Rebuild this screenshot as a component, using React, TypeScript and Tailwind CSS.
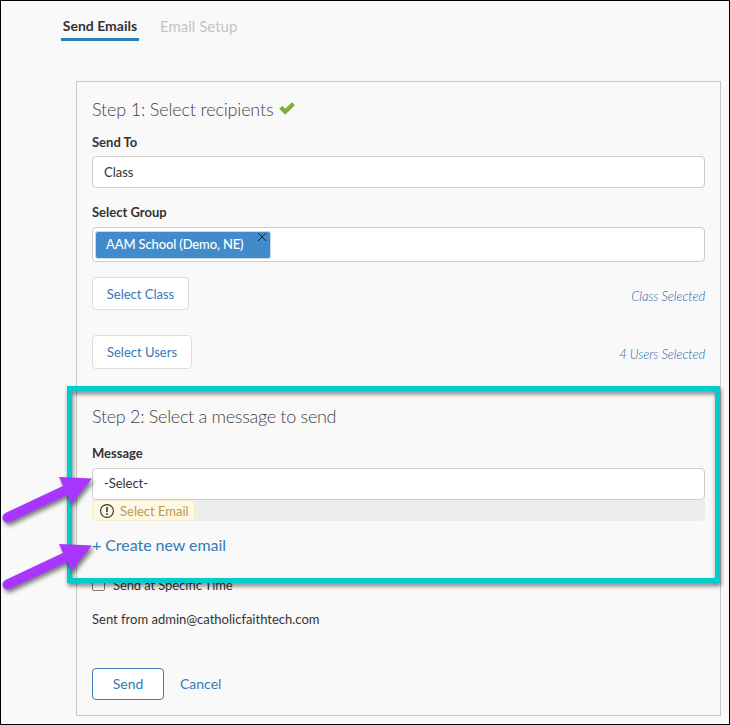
import React from "react";

function Label({ children }: { children: React.ReactNode }) {
  return <div className="h-5 text-[13px] leading-5 font-bold text-[#333]">{children}</div>;
}

function Arrow({ className }: { className: string }) {
  return (
    <svg className={`absolute left-[-1px] overflow-visible drop-shadow-[2px_3px_2px_rgba(0,0,0,0.5)] ${className}`} width="96" height="50" viewBox="0 0 96 50">
      <path d="M7.500 42.500L66 15" stroke="#a936ff" strokeWidth="10" strokeLinecap="round" />
      <path d="M92 3.500L59 2L71.500 29Z" fill="#a936ff" />
    </svg>
  );
}

export default function App() {
  return (
    <div className="relative h-[725px] w-[730px] overflow-hidden border border-black bg-[#f9f9f9] font-[Lato,sans-serif] text-[13px] text-[#333]">
      <nav className="flex h-[80px] items-start pt-[13px] pl-[60px] text-[14px] leading-[24px]">
        <div className="h-[27px] w-[78px] border-b-3 border-[#2a7fb5] text-center font-bold whitespace-nowrap">Send Emails</div>
        <div className="ml-[21px] text-[15px] leading-[24px] text-[#c4c4c4]">Email Setup</div>
      </nav>

      <main className="ml-[75px] flex h-[635px] w-[645px] flex-col border border-[#c8c8c8] px-[15px]">
        <h2 className="mt-[15px] flex h-6 items-center text-[18px] leading-6 font-light tracking-[-0.17px] text-[#444]">
          Step 1: Select recipients
          <svg className="-mt-[2px] ml-[6px]" width="16" height="13" viewBox="0 0 16 13">
            <path d="M0.300 6.800L3.300 3.800L6.200 6.700L12.900 0.200L15.900 3.200L6.200 12.700Z" fill="#82ad37" />
          </svg>
        </h2>
        <div className="mt-[11px]"><Label>Send To</Label></div>
        <div className="mt-[4px] h-8 rounded border border-[#ccc] bg-white pl-[11px] leading-[31px]">Class</div>
        <div className="mt-[14px]"><Label>Select Group</Label></div>
        <div className="mt-[5px] flex h-[35px] items-center rounded border border-[#ccc] bg-white pl-[2px]">
          <div className="relative h-[28px] w-[176px] rounded-[3px] border border-[#c9d9e8] bg-[#428bca] pl-[10px] leading-[24px] font-medium tracking-[-0.14px] text-white">
            AAM School (Demo, NE)
            <svg className="absolute top-[1px] right-[4px]" width="8" height="8" viewBox="0 0 8 8">
              <path d="M0 0L8 8M8 0L0 8" stroke="#222" strokeWidth="1" />
            </svg>
          </div>
        </div>
        <div className="mt-[15px] flex h-[33px] items-center justify-between text-[#337ab7]">
          <button className="h-full w-[97px] rounded border border-[#ddd] bg-white pt-[2px]">Select Class</button>
          <span className="mt-[6px] text-[13px] font-light tracking-[-0.1px] text-[#2468a8] italic">Class Selected</span>
        </div>
        <div className="mt-[25px] flex h-[34px] items-center justify-between text-[#337ab7]">
          <button className="h-full w-[100px] rounded border border-[#ddd] bg-white pt-[2px]">Select Users</button>
          <span className="mt-[6px] text-[13px] font-light tracking-[-0.1px] text-[#2468a8] italic">4 Users Selected</span>
        </div>

        <h2 className="mt-[35px] h-6 text-[18px] leading-6 font-light tracking-[-0.3px] text-[#444]">Step 2: Select a message to send</h2>
        <div className="mt-[15px]"><Label>Message</Label></div>
        <div className="mt-[5px] h-8 rounded border border-[#ccc] bg-white pl-[11px] leading-[29px] tracking-[-0.05px]">-Select-</div>
        <div className="flex h-[21px] rounded-b bg-[#eceeed]">
          <div className="flex w-[103px] items-center rounded border border-[#faebcc] bg-[#fcf8e3] pl-[7px] text-[#c09853]">
            <svg className="mr-[6px]" width="14" height="14" viewBox="0 0 14 14" fill="none" stroke="#333">
              <circle cx="7" cy="7" r="6.400" strokeWidth="1.100" />
              <path d="M7 3V8M7 9.300V10.900" strokeWidth="1.600" />
            </svg>
            <span className="pt-[2px]">Select Email</span>
          </div>
        </div>
        <a className="mt-[12px] h-6 text-[16px] leading-6 tracking-[-0.05px] text-[#337ab7]">+ Create new email</a>
        <label className="mt-[19px] flex h-5 items-center tracking-[-0.1px]">
          <span className="-mt-[3px] mr-[8px] h-[13px] w-[13px] rounded-[2px] border border-[#767676] bg-white" />
          Send at Specific Time
        </label>
        <div className="mt-[13px] h-5 leading-5">Sent from admin@catholicfaithtech.com</div>
        <div className="mt-[39px] flex h-8 items-center text-[14px] text-[#337ab7]">
          <button className="h-8 w-[72px] rounded border border-[#337ab7] bg-white pb-[2px]">Send</button>
          <a className="ml-4 pb-[2px]">Cancel</a>
        </div>
      </main>

      <div className="absolute top-[385px] left-[66px] h-[197px] w-[653px] border-5 border-[#00cccc] drop-shadow-[1px_3px_2px_rgba(0,0,0,0.5)]" />
      <Arrow className="top-[474px]" />
      <Arrow className="top-[541px]" />
    </div>
  );
}
